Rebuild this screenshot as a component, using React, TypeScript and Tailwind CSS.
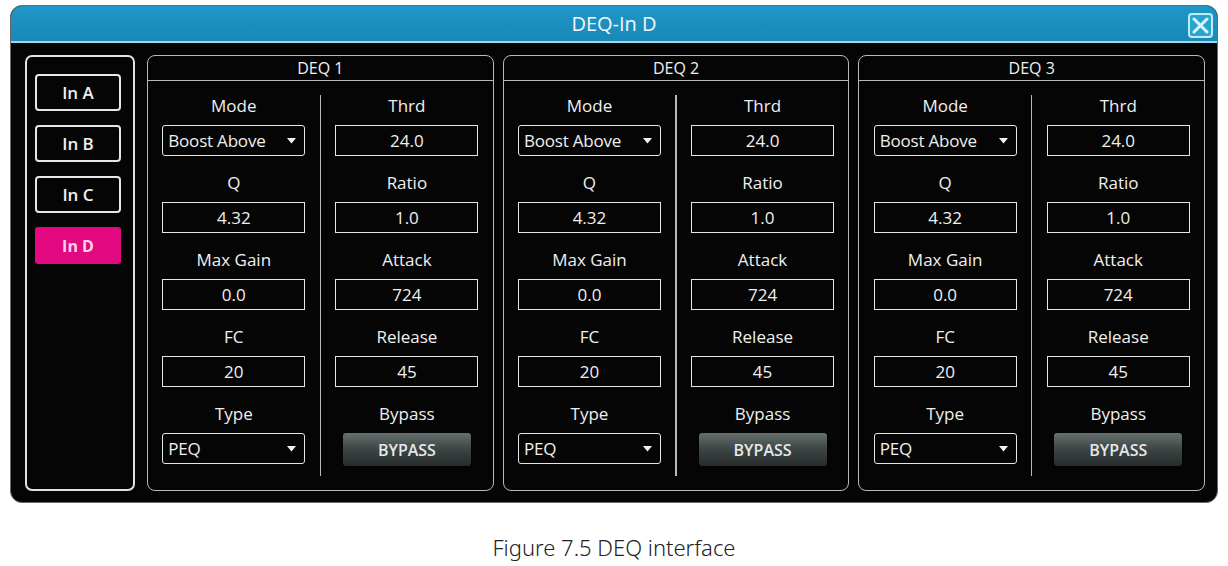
import React from "react";

type Field = { label: string; value: string; kind: "select" | "box" | "button" };

const leftFields: Field[] = [
  { label: "Mode", value: "Boost Above", kind: "select" },
  { label: "Q", value: "4.32", kind: "box" },
  { label: "Max Gain", value: "0.0", kind: "box" },
  { label: "FC", value: "20", kind: "box" },
  { label: "Type", value: "PEQ", kind: "select" },
];

const rightFields: Field[] = [
  { label: "Thrd", value: "24.0", kind: "box" },
  { label: "Ratio", value: "1.0", kind: "box" },
  { label: "Attack", value: "724", kind: "box" },
  { label: "Release", value: "45", kind: "box" },
  { label: "Bypass", value: "BYPASS", kind: "button" },
];

const inputs = ["In A", "In B", "In C", "In D"];

function Caret() {
  return (
    <svg width="9" height="6" viewBox="0 0 9 6" className="shrink-0">
      <path d="M0 0 H9 L4.5 5.5 Z" fill="#f2f2f2" />
    </svg>
  );
}

function Control({ field }: { field: Field }) {
  if (field.kind === "select") {
    return (
      <div className="flex h-[31px] w-[143px] items-center justify-between rounded-[3px] border-[1.5px] border-[#e6e6e6] pl-[5px] pr-[8px] text-[17px] tracking-[-0.2px] text-[#f0f0f0]">
        <span>{field.value}</span>
        <Caret />
      </div>
    );
  }
  if (field.kind === "button") {
    return (
      <div className="flex h-[33px] w-[128px] items-center justify-center rounded-[3px] bg-gradient-to-b from-[#66706e] via-[#3c4544] to-[#262b2b] text-[16px] font-semibold text-[#e4e8e8] shadow-[0_1px_2px_rgba(0,0,0,0.8)]">
        {field.value}
      </div>
    );
  }
  return (
    <div className="flex h-[31px] w-[143px] items-center justify-center border-[1.5px] border-[#e6e6e6] text-[17px] text-[#f0f0f0]">
      {field.value}
    </div>
  );
}

function Column({ fields }: { fields: Field[] }) {
  return (
    <div className="flex flex-1 flex-col items-center gap-[15px] pt-[13px]">
      {fields.map((f) => (
        <div key={f.label} className="flex flex-col items-center">
          <div className="mb-[7px] flex h-[24px] items-center text-[17px] text-[#f0f0f0]">{f.label}</div>
          <Control field={f} />
        </div>
      ))}
    </div>
  );
}

function DeqPanel({ title }: { title: string }) {
  return (
    <div className="flex flex-1 flex-col rounded-[8px] border-[1.5px] border-[#b8b8b8]">
      <div className="flex h-[25px] items-center justify-center border-b-[1.5px] border-[#b8b8b8] text-[16px] text-[#f0f0f0]">
        {title}
      </div>
      <div className="flex flex-1">
        <Column fields={leftFields} />
        <div className="my-[14px] w-[1.5px] bg-[#b8b8b8]" />
        <Column fields={rightFields} />
      </div>
    </div>
  );
}

export default function App() {
  return (
    <div
      className="flex h-[566px] w-[1228px] flex-col bg-white px-[10px] pt-[5px]"
      style={{ fontFamily: '"Open Sans", "Noto Sans", sans-serif' }}
    >
      <div className="flex h-[498px] flex-col overflow-hidden rounded-[12px] border border-[#6a6a6a] bg-[#050505]">
        {/* title bar */}
        <div className="relative flex h-[37px] shrink-0 items-center justify-center border-b-2 border-[#9fd6e6] bg-gradient-to-b from-[#1f97c6] to-[#1a88b8]">
          <span className="text-[20px] text-[#f4f8fa]">DEQ-In D</span>
          <div className="absolute right-[4px] top-[7px] flex h-[25px] w-[25px] items-center justify-center rounded-[4px] border-2 border-[#bdeefc] bg-[#2aa3cf]">
            <svg width="17" height="17" viewBox="0 0 17 17">
              <path d="M2 2 L15 15 M15 2 L2 15" stroke="#d8f6ff" strokeWidth="3" strokeLinecap="round" />
            </svg>
          </div>
        </div>

        {/* body */}
        <div className="flex flex-1 pb-[11px] pl-[14px] pr-[12px] pt-[12px]">
          <div className="mr-[12px] flex w-[110px] flex-col gap-[14px] rounded-[7px] border-2 border-[#e2e2e2] pl-[8px] pt-[17px]">
            {inputs.map((name) =>
              name === "In D" ? (
                <div
                  key={name}
                  className="flex h-[37px] w-[86px] items-center justify-center rounded-[3px] bg-[#e2087f] text-[16px] font-bold text-[#f8d6ea]"
                >
                  {name}
                </div>
              ) : (
                <div
                  key={name}
                  className="flex h-[37px] w-[86px] items-center justify-center rounded-[4px] border-2 border-[#e6e6e6] text-[17px] font-semibold text-[#f0f0f0]"
                >
                  {name}
                </div>
              )
            )}
          </div>
          <div className="flex flex-1 gap-[9px]">
            <DeqPanel title="DEQ 1" />
            <DeqPanel title="DEQ 2" />
            <DeqPanel title="DEQ 3" />
          </div>
        </div>
      </div>

      <div
        className="pt-[29px] text-center text-[22px] font-light leading-[30px] text-[#222]"
        style={{ fontFamily: '"Noto Sans", "Open Sans", sans-serif' }}
      >
        Figure 7.5 DEQ interface
      </div>
    </div>
  );
}
